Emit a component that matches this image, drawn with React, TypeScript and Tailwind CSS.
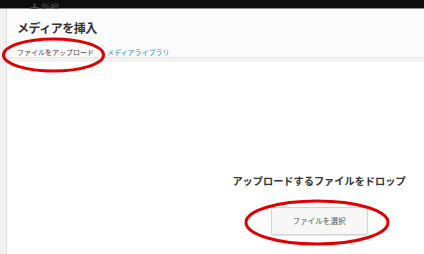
export default function App() {
  return (
    <div
      className="relative flex h-[254px] w-[424px] flex-col overflow-hidden bg-white"
      style={{ fontFamily: '"Noto Sans CJK JP", "Noto Sans", sans-serif' }}
    >
      {/* TOP BAR */}
      <div className="flex h-[9px] shrink-0 items-end border-b border-[#8c8c8c] bg-[#0d0d0d] pl-[30px]">
        <span className="-mb-[4px] text-[9px] leading-none text-[#4a4a4a]">✚ 新規</span>
      </div>

      {/* BODY */}
      <div className="flex flex-1">
        <aside className="w-[7px] shrink-0 border-r border-[#dcdcdc] bg-[#f1f1f1]" />

        <main className="flex flex-1 flex-col">
          {/* HEADER */}
          <div className="h-[48px] shrink-0 bg-[#fcfcfc] pl-[10px]">
            <h1 className="pt-[12px] text-[12px] font-bold leading-[14px] tracking-[-0.5px] text-[#333]">
              メディアを挿入
            </h1>
            <div className="mt-[12px] flex items-center text-[7px] leading-[10px]">
              <span className="text-[#444]">ファイルをアップロード</span>
              <span className="ml-[13px] text-[#2a87b5]">メディアライブラリ</span>
            </div>
          </div>
          <div className="h-[5px] shrink-0 border-t border-[#e6e6e6] bg-[#f3f3f3]" />

          {/* CONTENT */}
          <div className="flex flex-1 flex-col items-center pl-[207px] pt-[112px]">
            <p className="whitespace-nowrap text-[10.2px] font-semibold leading-[14px] text-[#333]">
              アップロードするファイルをドロップ
            </p>
            <button className="mt-[19px] flex h-[28px] w-[97px] shrink-0 items-center justify-center rounded-[2px] border border-[#d4d4d4] bg-[#f7f7f7] text-[7.6px] text-[#555] shadow-[0_1px_0_#e6e6e6]">
              ファイルを選択
            </button>
          </div>
        </main>
      </div>

      {/* RED MARKERS */}
      <svg className="pointer-events-none absolute left-0 top-0" width="424" height="254">
        <ellipse cx="53.5" cy="55" rx="50" ry="16" fill="none" stroke="#e10000" strokeWidth="3" />
        <ellipse cx="317" cy="222.5" rx="71" ry="21.5" fill="none" stroke="#e10000" strokeWidth="3" />
      </svg>
    </div>
  );
}
